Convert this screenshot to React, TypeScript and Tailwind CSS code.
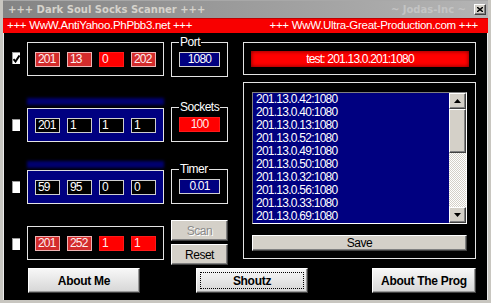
import React from 'react'

const ips = [
  '201.13.0.42:1080',
  '201.13.0.40:1080',
  '201.13.0.13:1080',
  '201.13.0.52:1080',
  '201.13.0.49:1080',
  '201.13.0.50:1080',
  '201.13.0.32:1080',
  '201.13.0.56:1080',
  '201.13.0.33:1080',
  '201.13.0.69:1080',
]

type Tone = 'red' | 'hot' | 'dark' | 'navy'

const tones: Record<Tone, string> = {
  red: 'bg-[#d32c2c] border-[#eeb4b4] text-[#fff0f0]',
  hot: 'bg-[#ff0000] border-[#ff1a1a] text-[#ffe8e8]',
  dark: 'bg-black border-[#cfcfcf] text-white',
  navy: 'bg-[#000080] border-[#cfcfcf] text-white',
}

function Field({ value, tone, wide }: { value: string; tone: Tone; wide?: boolean }) {
  return (
    <div
      className={`h-[15px] border text-[12px] leading-[13px] tracking-[-0.8px] ${tones[tone]} ${
        wide ? 'w-[41px] text-center' : 'w-[25px] pl-[2px]'
      }`}
    >
      {value}
    </div>
  )
}

function Check({ on }: { on?: boolean }) {
  return (
    <div className="w-[8px] h-[12px] bg-white border-l border-t border-[#9a9a9a] flex items-center justify-center">
      {on && (
        <svg width="7" height="8" viewBox="0 0 7 8">
          <path d="M0.5 4 L2.5 6.5 L6.5 0.5" stroke="#000" strokeWidth="2" fill="none" />
        </svg>
      )}
    </div>
  )
}

function IpBox({ values, tone, navy }: { values: string[]; tone: Tone[]; navy?: boolean }) {
  return (
    <div
      className={`w-[137px] h-[34px] border border-[#e4e4e4] flex gap-[7px] pl-[7px] pt-[9px] ${
        navy ? 'bg-[#000080]' : 'bg-black'
      }`}
    >
      {values.map((v, i) => (
        <Field key={i} value={v} tone={tone[i]} />
      ))}
    </div>
  )
}

function Group({ label, children, className }: { label: string; children: React.ReactNode; className?: string }) {
  return (
    <div className={`relative w-[57px] h-[35px] border border-[#e4e4e4] flex justify-center pt-[9px] ${className ?? ''}`}>
      <span className="absolute -top-[8px] left-[7px] px-[1px] bg-black text-white text-[12px] leading-[14px] tracking-[-0.5px]">
        {label}
      </span>
      {children}
    </div>
  )
}

function Band() {
  return <div className="w-[137px] h-[7px] bg-[#00006e] blur-[1.5px]" />
}

const winBtn =
  'bg-[#d4d0c8] border border-t-white border-l-white border-r-[#404040] border-b-[#404040] shadow-[inset_-1px_-1px_0_#808080]'

function BigButton({ label, focus, className }: { label: string; focus?: boolean; className: string }) {
  return (
    <div
      className={`h-[25px] p-[3px] border border-t-white border-l-white border-r-[#404040] border-b-[#404040] bg-[linear-gradient(#f7f7f7,#d6d6d6)] shadow-[inset_-1px_-1px_0_#9a9a9a] ${className}`}
    >
      <div
        className={`h-full flex items-center justify-center text-[12px] font-bold tracking-[-0.3px] text-black ${
          focus ? 'border border-dotted border-black' : ''
        }`}
      >
        {label}
      </div>
    </div>
  )
}

export default function App() {
  return (
    <div className="w-[491px] h-[303px] bg-[#c8c6c0] px-[3px] pb-[3px] flex flex-col font-['Liberation_Sans',Arial,sans-serif] overflow-hidden">
      {/* caption */}
      <div className="h-[18px] flex items-center pl-[5px] pr-[2px] bg-[linear-gradient(90deg,#848484,#b4b4b4)] border-t border-[#a8a8a8]">
        <span className="font-['DejaVu_Sans',sans-serif] font-bold text-[10px] text-[#d6d3cc] whitespace-pre">
          +++ Dark Soul Socks Scanner +++
        </span>
        <span className="ml-auto font-['DejaVu_Sans',sans-serif] font-bold text-[10px] text-[#c4c4c4] whitespace-pre">
          ~ Jodas-Inc ~
        </span>
        <div className={`ml-[8px] w-[12px] h-[11px] flex items-center justify-center ${winBtn}`}>
          <svg width="6" height="5" viewBox="0 0 6 5">
            <path d="M0 0 L6 5 M6 0 L0 5" stroke="#000" strokeWidth="1.4" />
          </svg>
        </div>
      </div>

      {/* link bar */}
      <div className="h-[15px] flex items-center pl-[4px] pr-[10px] bg-[#f80000] border-t border-[#c00000] text-white text-[11.5px] tracking-[-0.3px] whitespace-pre">
        <span>+++ WwW.AntiYahoo.PhPbb3.net +++</span>
        <span className="ml-auto">+++ WwW.Ultra-Great-Production.com +++</span>
      </div>

      {/* body */}
      <div className="flex-1 bg-black border-l border-r border-[#ececec] flex flex-col">
        <div className="flex pl-[8px]">
          {/* left column */}
          <div className="w-[216px] flex flex-col">
            <div className="mt-[9px] flex items-start">
              <div className="mt-[10px]">
                <Check on />
              </div>
              <div className="ml-[7px]">
                <IpBox values={['201', '13', '0', '202']} tone={['red', 'red', 'hot', 'red']} />
              </div>
              <Group label="Port" className="ml-[7px] h-[34px]">
                <Field value="1080" tone="navy" wide />
              </Group>
            </div>

            <div className="mt-[21px] flex items-start">
              <div className="mt-[21px]">
                <Check />
              </div>
              <div className="ml-[7px] flex flex-col">
                <Band />
                <div className="mt-[3px]">
                  <IpBox values={['201', '1', '1', '1']} tone={['dark', 'dark', 'dark', 'dark']} navy />
                </div>
              </div>
              <Group label="Sockets" className="ml-[7px] mt-[9px]">
                <Field value="100" tone="hot" wide />
              </Group>
            </div>

            <div className="mt-[19px] flex items-start">
              <div className="mt-[20px]">
                <Check />
              </div>
              <div className="ml-[7px] flex flex-col">
                <Band />
                <div className="mt-[2px]">
                  <IpBox values={['59', '95', '0', '0']} tone={['dark', 'dark', 'dark', 'dark']} navy />
                </div>
              </div>
              <Group label="Timer" className="ml-[7px] mt-[8px]">
                <Field value="0.01" tone="navy" wide />
              </Group>
            </div>

            <div className="mt-[16px] flex items-start">
              <div className="mt-[18px]">
                <Check />
              </div>
              <div className="ml-[7px] mt-[6px]">
                <IpBox values={['201', '252', '1', '1']} tone={['red', 'red', 'hot', 'hot']} />
              </div>
              <div className="ml-[7px] w-[57px] flex flex-col">
                <div
                  className={`h-[21px] flex items-center justify-center text-[12px] tracking-[-0.5px] text-[#8a8a8a] [text-shadow:1px_1px_0_#fff] ${winBtn}`}
                >
                  Scan
                </div>
                <div
                  className={`mt-[3px] h-[21px] flex items-center justify-center text-[12px] tracking-[-0.5px] text-black ${winBtn}`}
                >
                  Reset
                </div>
              </div>
            </div>
          </div>

          {/* right column */}
          <div className="ml-[15px] w-[233px] flex flex-col pt-[9px]">
            <div className="h-[33px] border border-[#e4e4e4] pl-[7px] pr-[6px] pt-[8px]">
              <div className="h-[16px] bg-[#ff0000] shadow-[inset_0_0_4px_#6a0000] flex items-center justify-center text-white text-[12px] tracking-[-0.8px]">
                test: 201.13.0.201:1080
              </div>
            </div>

            <div className="mt-[7px] h-[177px] border border-[#e4e4e4] px-[8px] pt-[9px]">
              <div className="h-[132px] flex bg-[#000080] border border-t-[#808080] border-l-[#808080] border-r-white border-b-white">
                <div className="flex-1 pl-[3px] text-white text-[12px] leading-[13px] tracking-[-0.75px]">
                  {ips.map((ip) => (
                    <div key={ip}>{ip}</div>
                  ))}
                </div>
                <div className="w-[17px] flex flex-col">
                  <div className={`h-[16px] flex items-center justify-center ${winBtn}`}>
                    <svg width="7" height="4" viewBox="0 0 7 4">
                      <path d="M3.5 0 L7 4 L0 4 Z" fill="#000" />
                    </svg>
                  </div>
                  <div className={`h-[44px] ${winBtn}`} />
                  <div className="flex-1 bg-[repeating-conic-gradient(#ffffff_0_25%,#d4d0c8_0_50%)] bg-[length:2px_2px]" />
                  <div className={`h-[16px] flex items-center justify-center ${winBtn}`}>
                    <svg width="7" height="4" viewBox="0 0 7 4">
                      <path d="M0 0 L7 0 L3.5 4 Z" fill="#000" />
                    </svg>
                  </div>
                </div>
              </div>
              <div
                className={`mt-[11px] h-[16px] flex items-center justify-center text-[12px] tracking-[-0.5px] text-black ${winBtn}`}
              >
                Save
              </div>
            </div>
          </div>
        </div>

        {/* bottom buttons */}
        <div className="mt-[3px] flex">
          <BigButton label="About Me" className="ml-[24px] w-[112px]" />
          <BigButton label="Shoutz" focus className="ml-[56px] w-[112px]" />
          <BigButton label="About The Prog" className="ml-[64px] w-[104px]" />
        </div>
      </div>
    </div>
  )
}
